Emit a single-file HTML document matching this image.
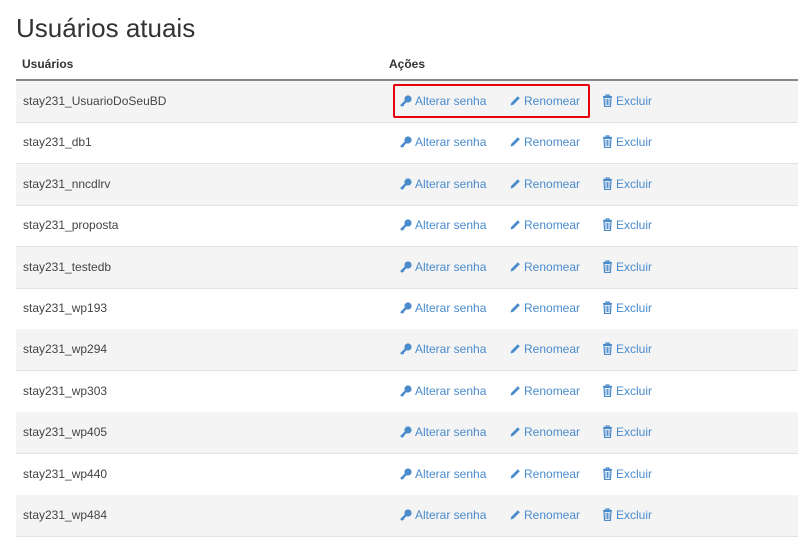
<!DOCTYPE html><html><head><style>
body{margin:0;background:#fff;font-family:"Liberation Sans",sans-serif;width:800px;height:554px;overflow:hidden;position:relative;color:#333}
h1{position:absolute;left:16px;top:13px;margin:0;font-size:26px;font-weight:normal;color:#333}
.hd{position:absolute;top:57px;font-size:12px;font-weight:bold;color:#333}
.line{position:absolute;left:16px;width:782px;top:79px;height:2px;background:#888}
.row{position:absolute;left:16px;width:782px;height:41px;border-bottom:1px solid #e2e2e2;font-size:12px;line-height:41px}
.row.g{background:#f4f4f4}
.row span{position:absolute;top:0}
.u{left:7px;color:#444}
.a{color:#4a8bcc}
svg{vertical-align:-2px;margin-right:3px}
.box{position:absolute;left:393px;top:84px;width:193px;height:30px;border:2px solid #e8000d;border-radius:2px}
</style></head><body>
<h1>Usuários atuais</h1>
<div class="hd" style="left:22px">Usuários</div>
<div class="hd" style="left:389px">Ações</div>
<div class="line"></div>
<div id="t"></div>
<div class="box"></div>
<script>
var n=["stay231_UsuarioDoSeuBD","stay231_db1","stay231_nncdlrv","stay231_proposta","stay231_testedb","stay231_wp193","stay231_wp294","stay231_wp303","stay231_wp405","stay231_wp440","stay231_wp484"];
var c="#4a8bcc";
var key='<svg width="12" height="12" viewBox="0 0 12 12"><circle cx="8" cy="4" r="3.6" fill="'+c+'"/><path d="M6 6 L1 11" stroke="'+c+'" stroke-width="2.4"/><path d="M2.5 9.5l1.2 1.2" stroke="'+c+'" stroke-width="1.5"/></svg>';
var pen='<svg width="12" height="12" viewBox="0 0 12 12"><path d="M1.5 10.5l0.8-2.8 6.5-6.5 2 2-6.5 6.5z" fill="'+c+'"/></svg>';
var tr='<svg width="11" height="13" viewBox="0 0 11 13"><path d="M1 2.5h9M4 2.5V1h3v1.5" stroke="'+c+'" stroke-width="1.2" fill="none"/><path d="M2 3.5h7l-.6 9H2.6z" fill="none" stroke="'+c+'" stroke-width="1.2"/><path d="M4 5v6M5.5 5v6M7 5v6" stroke="'+c+'" stroke-width=".9"/></svg>';
var h="";n.forEach(function(s,i){h+='<div class="row'+(i%2==0?' g':'')+'" style="top:'+Math.round(81+i*41.4)+'px"><span class="u">'+s+'</span><span class="a" style="left:384px">'+key+'Alterar senha</span><span class="a" style="left:493px">'+pen+'Renomear</span><span class="a" style="left:586px">'+tr+'Excluir</span></div>'});
document.getElementById("t").innerHTML=h;
</script>
</body></html>
